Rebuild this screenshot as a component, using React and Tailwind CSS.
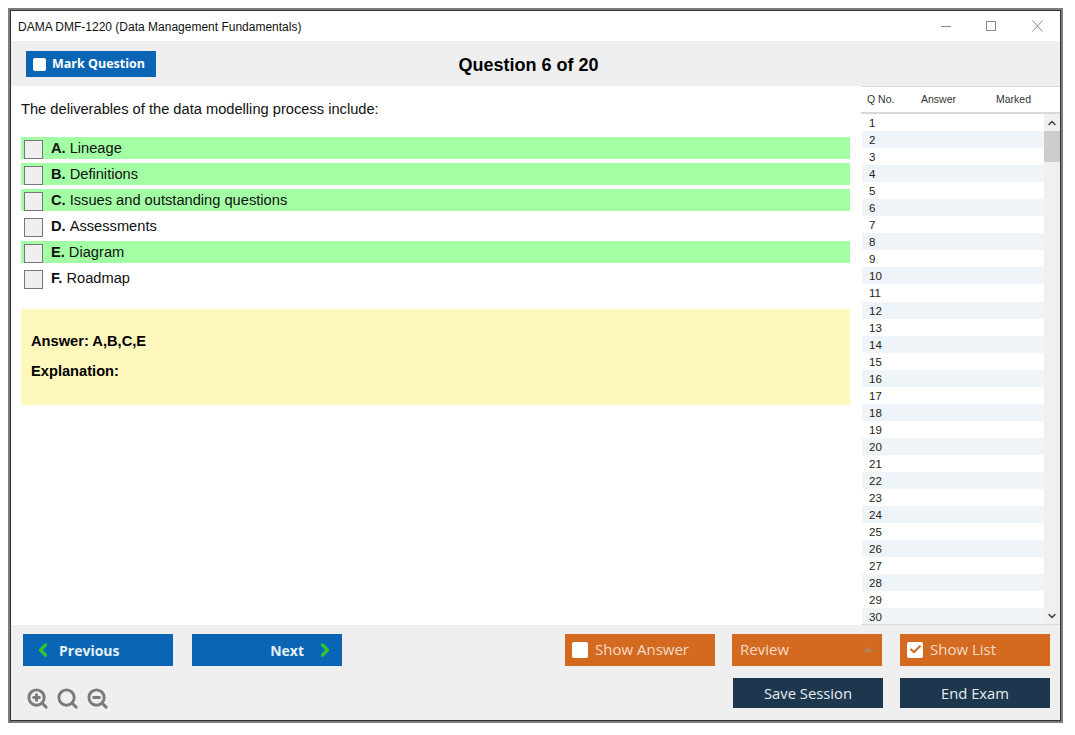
import { Check, ChevronLeft, ChevronRight, ChevronUp, ChevronDown, ZoomIn, ZoomOut, Search } from 'lucide-react'

const options = [
    { key: 'A.', text: 'Lineage', correct: true },
    { key: 'B.', text: 'Definitions', correct: true },
    { key: 'C.', text: 'Issues and outstanding questions', correct: true },
    { key: 'D.', text: 'Assessments', correct: false },
    { key: 'E.', text: 'Diagram', correct: true },
    { key: 'F.', text: 'Roadmap', correct: false },
]

const rows = Array.from({ length: 30 }, (_, i) => i + 1)

const btnFont = "font-['Open_Sans',sans-serif]"

function OrangeButton({ children }) {
    return (
        <div className={`w-[150px] h-[32px] pb-[1px] bg-[#d46a20] flex items-center text-[#f3dcc9] text-[15px] ${btnFont}`}>
            {children}
        </div>
    )
}

function DarkButton({ children }) {
    return (
        <div className={`w-[150px] h-[30px] bg-[#1c374e] flex items-center justify-center text-[#e8edf1] text-[14.8px] ${btnFont}`}>
            {children}
        </div>
    )
}

function WindowControls() {
    return (
        <svg width="102" height="14" viewBox="0 0 102 14" fill="none" stroke="#8a8a8a" strokeWidth="1">
            <path d="M0 7.5h10" />
            <rect x="45.5" y="2.5" width="9" height="9" />
            <path d="M91.5 1.5l10 11M101.5 1.5l-10 11" />
        </svg>
    )
}

export default function App() {
    return (
        <div className="w-[1075px] h-[735px] bg-white p-2 font-['Liberation_Sans',sans-serif]">
            <div className="w-[1055px] h-[715px] border-2 border-[#7d7d7d] flex flex-col">
                <div className="flex-1 border border-[#333] flex flex-col min-h-0">
                    {/* Title bar */}
                    <div className="h-[30px] bg-white flex items-center justify-between pl-[7px] pr-[17px]">
                        <span className="text-[12px] text-[#111] pt-[1px]">DAMA DMF-1220 (Data Management Fundamentals)</span>
                        <WindowControls />
                    </div>

                    {/* Toolbar */}
                    <div className="h-[45px] bg-[#efefef] flex items-center">
                        <div className={`ml-[15px] mt-[1px] w-[130px] h-[26px] pt-[1px] bg-[#0a66b4] flex items-center gap-[6px] pl-[7px] text-white text-[12.5px] font-bold ${btnFont}`}>
                            <span className="w-[13px] h-[13px] bg-white rounded-[2px]" />
                            Mark Question
                        </div>
                        <div className="flex-1 text-center pl-[1px] pr-[160px] pt-[4px] text-[18px] font-bold text-black">Question 6 of 20</div>
                    </div>

                    {/* Main */}
                    <div className="h-[539px] flex">
                        <div className="w-[850px] bg-white pl-[10px] pr-[11px]">
                            <p className="mt-[14px] h-[18px] leading-[18px] text-[14.67px] text-[#111]">The deliverables of the data modelling process include:</p>
                            <div className="mt-[19px] flex flex-col gap-[4px]">
                                {options.map((o) => (
                                    <div key={o.key} className={`h-[22px] flex items-center pl-[3px] text-[14.67px] text-[#111] ${o.correct ? 'bg-[#a3ffa3]' : 'bg-white'}`}>
                                        <span className="w-[19px] h-[19px] mt-[2px] bg-[#efefef] border border-[#777]" />
                                        <span className="ml-[8px] font-bold mr-[4px]">{o.key}</span>
                                        <span>{o.text}</span>
                                    </div>
                                ))}
                            </div>
                            <div className="mt-[20px] h-[96px] bg-[#fff8bd] pl-[10px] pt-[23px] text-[14.67px] font-bold text-black">
                                <p className="h-[18px] leading-[18px]">Answer: A,B,C,E</p>
                                <p className="mt-[12px] h-[18px] leading-[18px]">Explanation:</p>
                            </div>
                        </div>

                        {/* Question list */}
                        <div className="flex-1 flex flex-col bg-white border-t border-[#dcdcdc] min-w-0">
                            <div className="h-[27px] shrink-0 border-b-2 border-[#d9d9d9] flex items-center text-[10.5px] text-[#333] bg-white">
                                <span className="ml-[6px] w-[54px]">Q No.</span>
                                <span className="w-[75px]">Answer</span>
                                <span>Marked</span>
                            </div>
                            <div className="flex-1 flex min-h-0 overflow-hidden border-b border-[#dcdcdc]">
                                <div className="flex-1 pl-[1px]">
                                    {rows.map((n) => (
                                        <div key={n} className={`h-[17.048px] leading-[19px] pl-[7px] text-[11.5px] text-[#222] ${n % 2 === 0 ? 'bg-[#eff4f9]' : 'bg-white'}`}>
                                            {n}
                                        </div>
                                    ))}
                                </div>
                                <div className="w-[16px] bg-[#f0f0f0] flex flex-col items-center">
                                    <div className="h-[17px] flex items-center justify-center text-[#444] pt-[1px]">
                                        <ChevronUp size={12} strokeWidth={3} />
                                    </div>
                                    <div className="w-full h-[31px] bg-[#cdcdcd]" />
                                    <div className="flex-1" />
                                    <div className="h-[17px] flex items-center justify-center text-[#444]">
                                        <ChevronDown size={12} strokeWidth={3} />
                                    </div>
                                </div>
                            </div>
                        </div>
                    </div>

                    {/* Footer */}
                    <div className="flex-1 bg-[#efefef] flex justify-between pl-[12px] pr-[10px] pt-[9px]">
                        <div className="flex flex-col">
                            <div className="flex gap-[19px]">
                                <div className={`w-[150px] h-[32px] bg-[#0a66b4] flex items-center pl-[10px] text-[#e6eff7] text-[14px] font-bold ${btnFont}`}>
                                    <ChevronLeft size={20} strokeWidth={4} className="text-[#2ec52e]" />
                                    <span className="ml-[6px]">Previous</span>
                                </div>
                                <div className={`w-[150px] h-[32px] bg-[#0a66b4] flex items-center justify-end pr-[7px] text-[#e6eff7] text-[14px] font-bold ${btnFont}`}>
                                    <span className="mr-[11px]">Next</span>
                                    <ChevronRight size={20} strokeWidth={4} className="text-[#2ec52e]" />
                                </div>
                            </div>
                            <div className="mt-[21px] ml-[3px] flex gap-[7px] text-[#7b7b7b]">
                                <ZoomIn size={23} strokeWidth={3} />
                                <Search size={23} strokeWidth={3} />
                                <ZoomOut size={23} strokeWidth={3} />
                            </div>
                        </div>
                        <div className="flex flex-col gap-[12px]">
                            <div className="flex">
                                <OrangeButton>
                                    <span className="ml-[7px] mr-[7px] w-[16px] h-[16px] bg-white rounded-[2px]" />
                                    Show Answer
                                </OrangeButton>
                                <div className="ml-[17px]">
                                    <OrangeButton>
                                        <span className="ml-[8px] flex-1">Review</span>
                                        <span className="mr-[9px] w-0 h-0 border-x-[5px] border-x-transparent border-b-[5px] border-b-[#b0805c]" />
                                    </OrangeButton>
                                </div>
                                <div className="ml-[18px]">
                                    <OrangeButton>
                                        <span className="ml-[7px] mr-[7px] w-[16px] h-[16px] bg-white rounded-[2px] flex items-center justify-center text-[#d46a20]">
                                            <Check size={13} strokeWidth={4} />
                                        </span>
                                        Show List
                                    </OrangeButton>
                                </div>
                            </div>
                            <div className="flex justify-end gap-[17px]">
                                <DarkButton>Save Session</DarkButton>
                                <DarkButton>End Exam</DarkButton>
                            </div>
                        </div>
                    </div>
                </div>
            </div>
        </div>
    )
}
